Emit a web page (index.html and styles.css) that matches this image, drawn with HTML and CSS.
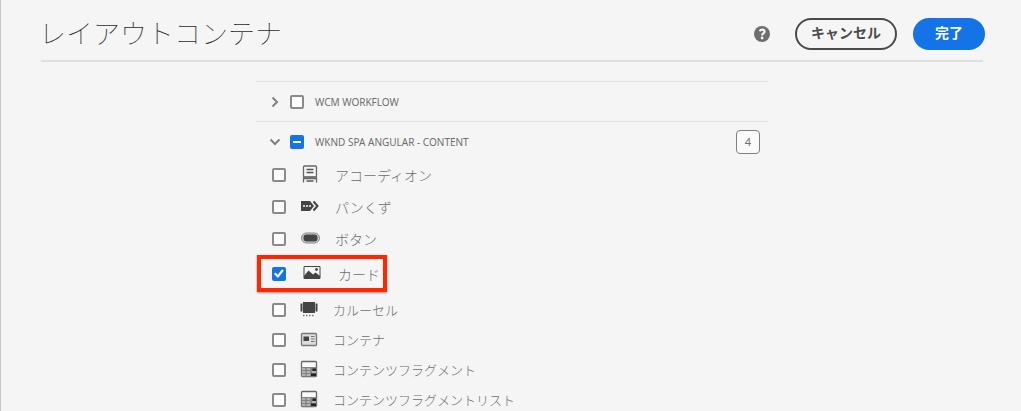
FILE: index.html
```
<!DOCTYPE html>
<html lang="ja">
<head>
<meta charset="utf-8">
<title>レイアウトコンテナ</title>
<link rel="stylesheet" href="styles.css">
</head>
<body>
<header class="header">
  <h1 class="title">レイアウトコンテナ</h1>
  <button class="help" type="button" aria-label="ヘルプ">
    <svg width="16" height="16" viewBox="0 0 16 16"><circle cx="8" cy="8" r="8" fill="#6e6e6e"/><path d="M5.500 5.200C6.200 4.200 7.200 3.700 8.100 3.700c1.500 0 2.400.8 2.400 2 0 1.700-2.300 1.700-2.300 3.700" fill="none" stroke="#f5f5f5" stroke-width="2.200"/><circle cx="8.100" cy="12" r="1.400" fill="#f5f5f5"/></svg>
  </button>
  <button class="btn btn-outline" type="button">キャンセル</button>
  <button class="btn btn-primary" type="button">完了</button>
</header>
<hr class="divider">
<main class="panel">
  <section class="group">
    <div class="group-head">
      <button class="toggle" type="button" aria-label="展開"><svg width="14" height="14" viewBox="0 0 14 14"><path d="M4.500 2.500 9 7l-4.500 4.500"/></svg></button>
      <input class="check" type="checkbox" id="wcm">
      <label class="group-label" for="wcm">WCM WORKFLOW</label>
    </div>
  </section>
  <section class="group">
    <div class="group-head">
      <button class="toggle" type="button" aria-label="折りたたむ"><svg width="14" height="14" viewBox="0 0 14 14"><path d="M2.500 4.500 7 9l4.500-4.500"/></svg></button>
      <input class="check mixed" type="checkbox" id="wknd">
      <label class="group-label" for="wknd">WKND SPA ANGULAR - CONTENT</label>
      <span class="count">4</span>
    </div>
    <ul class="items">
      <li class="item">
        <input class="check" type="checkbox" id="c1">
        <svg class="icon" viewBox="0 0 20 20"><path d="M3.500 12.500V3q0-1 1-1h11q1 0 1 1v9.500M3.500 18.500V14.500h13v4" fill="none" stroke="#666" stroke-width="1.300"/><path d="M3 13h14M6.500 5.500h7M6.500 8.500h7M6.500 17h7" stroke="#555" stroke-width="1.500"/></svg>
        <label for="c1">アコーディオン</label>
      </li>
      <li class="item">
        <input class="check" type="checkbox" id="c2">
        <svg class="icon" viewBox="0 0 20 20"><path d="M1 5h9l4 5-4 5H1z" fill="#444"/><path d="m13.500 5.500 4 4.500-4 4.500" fill="none" stroke="#444" stroke-width="2"/><path d="M3 9h2v2H3zm3 0h2v2H6zm3 0h2v2H9z" fill="#ccc"/></svg>
        <label for="c2">パンくず</label>
      </li>
      <li class="item">
        <input class="check" type="checkbox" id="c3">
        <svg class="icon" viewBox="0 0 20 20"><rect x="1.500" y="5" width="18" height="10" rx="5" fill="#ccc" stroke="#888"/><rect x="3.500" y="6.500" width="14" height="7" rx="3" fill="#444"/></svg>
        <label for="c3">ボタン</label>
      </li>
      <li class="item highlighted">
        <input class="check" type="checkbox" id="c4" checked>
        <svg class="icon" viewBox="0 0 20 20"><path d="M2 4.500h16v12H2z" fill="#f5f5f5" stroke="#444"/><path d="M2 14 6.500 8.500l4.500 4 2.500-2L18 14v3H2z" fill="#444"/><circle cx="14.500" cy="7.500" r="1.400" fill="#444"/></svg>
        <label for="c4">カード</label>
      </li>
      <li class="item compact">
        <input class="check" type="checkbox" id="c5">
        <svg class="icon" viewBox="0 0 20 20"><path d="M4 3h12v11H4zM1.500 4.500h2v8h-2zm15 0h2v8h-2z" fill="#444"/><path d="M4 16.500h12" stroke="#777" stroke-width="1.400" stroke-dasharray="1.500 1.500"/></svg>
        <label for="c5">カルーセル</label>
      </li>
      <li class="item compact">
        <input class="check" type="checkbox" id="c6">
        <svg class="icon" viewBox="0 0 20 20"><rect x="2.500" y="4.500" width="15" height="12" rx="1" fill="#ddd" stroke="#777" stroke-width="1.300"/><path d="M4.500 7.500h5.500V12H4.500z" fill="#444"/><path d="M12 7.500h3.500M12 10h3.500M12 12.500h3.500" stroke="#777"/></svg>
        <label for="c6">コンテナ</label>
      </li>
      <li class="item compact">
        <input class="check" type="checkbox" id="c7">
        <svg class="icon" viewBox="0 0 20 20"><rect x="2.500" y="2.500" width="15" height="15" rx="1" fill="#fafafa" stroke="#666" stroke-width="1.300"/><path d="M2.500 8h15v9.500h-15z" fill="#888"/><path d="M3 10h8M3 13h8M3 16h8M13 13h4" stroke="#ddd"/><path d="M7 8v9" stroke="#777"/><path d="M13.500 9.500h3.500v2.500h-3.500zM12 14.500h5v2.500h-5z" fill="#222"/></svg>
        <label for="c7">コンテンツフラグメント</label>
      </li>
      <li class="item compact">
        <input class="check" type="checkbox" id="c8">
        <svg class="icon" viewBox="0 0 20 20"><rect x="2.500" y="2.500" width="15" height="15" rx="1" fill="#fafafa" stroke="#666" stroke-width="1.300"/><path d="M2.500 8h15v9.500h-15z" fill="#888"/><path d="M3 10h8M3 13h8M3 16h8M13 13h4" stroke="#ddd"/><path d="M7 8v9" stroke="#777"/><path d="M13.500 9.500h3.500v2.500h-3.500zM12 14.500h5v2.500h-5z" fill="#222"/></svg>
        <label for="c8">コンテンツフラグメントリスト</label>
      </li>
    </ul>
  </section>
</main>
</body>
</html>
```
FILE: styles.css
```
* {
  box-sizing: border-box;
}

html {
  background: #f5f5f5;
  overflow: hidden;
}

body {
  margin: 0;
  min-height: 100vh;
  border-left: 1px solid #c8c8c8;
  color: #4b4b4b;
  font-family: "Noto Sans CJK JP", sans-serif;
}

button {
  padding: 0;
  border: 0;
  background: none;
  font-family: inherit;
}

svg {
  display: block;
}

.header {
  display: flex;
  align-items: center;
  padding: 8px 36px 0 38px;
  height: 60px;
}

.title {
  flex: 1;
  margin: 0;
  padding-bottom: 2px;
  color: #2c2c2c;
  font-size: 27px;
  font-weight: 100;
  line-height: 40px;
}

.help {
  margin-right: 25px;
}

.btn {
  height: 32px;
  border-radius: 16px;
  font-size: 14px;
  font-weight: 700;
  line-height: 20px;
  padding: 0 22px 4px;
}

.btn-outline {
  padding: 0 14px 4px;
  border: 2px solid #4b4b4b;
  color: #4b4b4b;
  margin-right: 16px;
}

.btn-primary {
  background: #1473e6;
  color: #fff;
}

.divider {
  height: 2px;
  margin: 0 38px 0 40px;
  border: 0;
  background: #e0e0e0;
}

.panel {
  max-width: 512px;
  margin: 19px 0 0 25%;
}

.group {
  border-top: 1px solid #e0e0e0;
}

.group-head {
  display: flex;
  align-items: center;
  height: 39px;
  padding: 0 8px 0 12px;
}

.toggle {
  width: 14px;
  margin-right: 8px;
}

.toggle path {
  fill: none;
  stroke: #808080;
  stroke-width: 2;
}

.check {
  appearance: none;
  flex: none;
  width: 14px;
  height: 14px;
  margin: 0;
  border: 2px solid #8a8a8a;
  border-radius: 2px;
  background: #fcfcfc;
}

.check:checked,
.mixed {
  display: grid;
  place-items: center;
  border-color: #1473e6;
  background-color: #1473e6;
}

.mixed::before {
  content: "";
  width: 8px;
  height: 2px;
  background: #fff;
}

.check:checked::before {
  content: "";
  width: 10px;
  height: 10px;
  background: #fff;
  clip-path: polygon(0 55%, 15% 40%, 38% 62%, 80% 8%, 98% 22%, 40% 95%);
}

.group-label {
  flex: 1;
  margin-left: 11px;
  color: #6e6e6e;
  font-family: "Noto Sans", sans-serif;
  font-size: 10px;
}

.count {
  width: 24px;
  height: 24px;
  border: 1px solid #808080;
  border-radius: 4px;
  background: #fafafa;
  color: #6e6e6e;
  font-family: "Noto Sans", sans-serif;
  font-size: 11px;
  line-height: 22px;
  text-align: center;
}

.items {
  margin: -2px 0 0;
  padding: 0;
  list-style: none;
}

.item {
  display: flex;
  align-items: center;
  height: 32px;
  padding-left: 16px;
  color: #6e6e6e;
  font-size: 14px;
  font-weight: 300;
  line-height: 20px;
}

.icon {
  width: 20px;
  height: 20px;
  margin: 0 15px 3px 14px;
}

.compact {
  height: 30px;
  font-size: 13px;
}

.compact .icon {
  margin: 0 14px 3px 13px;
}

.highlighted {
  width: 130px;
  height: 37px;
  margin: 0 0 3px 1px;
  padding-left: 11px;
  border: 4px solid #ff2600;
  box-shadow: 0 1px 2px #999;
}

.highlighted .icon {
  margin: 0 16px 3px 16px;
}
```
